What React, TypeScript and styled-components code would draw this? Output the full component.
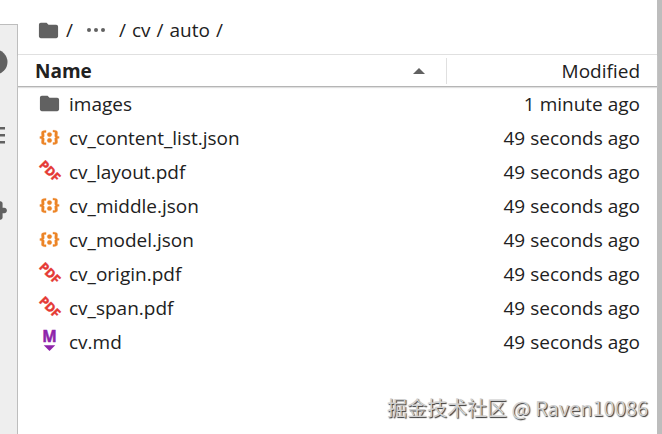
import React from "react";
import styled, { createGlobalStyle } from "styled-components";

const GlobalStyle = createGlobalStyle`
  *, *::before, *::after { box-sizing: border-box; }
  body {
    margin: 0;
    background: #fff;
    color: #212121;
    font: 19px/24px "Open Sans", "Noto Sans", sans-serif;
  }
  button { font: inherit; color: inherit; border: 0; padding: 0; background: none; cursor: pointer; }
  a { color: inherit; text-decoration: none; }
`;

const Shell = styled.div`
  display: flex;
  min-height: 100vh;
  position: relative;
  border-right: 5px solid #bdbdbd;
`;

const SideBar = styled.nav`
  flex: 0 0 18px;
  margin-top: 24px;
  padding-top: 24px;
  background: #eee;
  border: solid #bdbdbd;
  border-width: 1px 1px 0 0;
  overflow: hidden;
  display: flex;
  flex-direction: column;
  align-items: flex-start;
  gap: 48px;
`;

const SideTab = styled.button`
  display: flex;
  justify-content: flex-end;
  width: 8px;
  height: 26px;
  overflow: hidden;
  svg { flex: none; fill: #616161; }
`;

const Browser = styled.main`
  flex: 1;
  min-width: 0;
`;

const Crumbs = styled.nav`
  display: flex;
  align-items: center;
  height: 54px;
  padding: 6px 19px 0;
  gap: 6px;
`;

const CrumbLink = styled.a`
  display: flex;
  align-items: center;
`;

const MoreButton = styled.button`
  display: flex;
  align-items: center;
  padding: 0 7px;
`;

const Listing = styled.table`
  width: 100%;
  border-collapse: collapse;
  table-layout: fixed;
`;

const HeadRow = styled.tr`
  height: 32px;
  border-top: 1px solid #e0e0e0;
  border-bottom: 1px solid #b5b5b5;
  box-shadow: 0 1px 1px #e0e0e0;
`;

const HeadCell = styled.th<{ $modified?: boolean }>`
  width: ${(p) => (p.$modified ? "211px" : "auto")};
  padding: 2px 0;
  font-weight: ${(p) => (p.$modified ? 400 : 700)};
`;

const SortButton = styled.button<{ $modified?: boolean }>`
  display: flex;
  align-items: center;
  justify-content: ${(p) => (p.$modified ? "flex-end" : "space-between")};
  width: 100%;
  height: 26px;
  padding: 0 17px;
  border-left: ${(p) => (p.$modified ? "1px solid #e0e0e0" : "0")};
  font-weight: inherit;
`;

const Row = styled.tr`
  height: 34px;
`;

const NameCell = styled.td`
  padding: 0 0 0 20px;
`;

const FileLabel = styled.a`
  display: flex;
  align-items: center;
  gap: 8px;
`;

const ModifiedCell = styled.td`
  padding: 0 17px 0 0;
  text-align: right;
`;

const Icon = styled.svg`
  display: block;
  flex: none;
  width: 23px;
  height: 23px;
  overflow: visible;
`;

const Watermark = styled.div`
  position: absolute;
  right: 9px;
  bottom: 14px;
  color: #d0d0d0;
  font: 20px/24px "Noto Sans CJK SC", sans-serif;
  text-shadow: 1px 1px 1px #333;
`;

const FolderIcon = () => (
  <Icon viewBox="0 0 24 24" fill="#616161" aria-hidden="true">
    <path d="M10 4H4c-1.1 0-1.99.9-1.99 2L2 18c0 1.1.9 2 2 2h16c1.1 0 2-.9 2-2V8c0-1.1-.9-2-2-2h-8l-2-2z" />
  </Icon>
);

const JsonIcon = () => (
  <Icon viewBox="0 0 22 22" fill="#ec8426" stroke="#ec8426" strokeWidth="0.3" aria-hidden="true">
    <path d="M20.2 11.8c-1.6 0-1.7.5-1.7 1 0 .4.1.9.1 1.3.1.5.1.9.1 1.3 0 1.7-1.4 2.3-3.5 2.3h-.9v-1.9h.5c1.1 0 1.4 0 1.4-.8 0-.3 0-.6-.1-1 0-.4-.1-.8-.1-1.2 0-1.3 0-1.8 1.3-2-1.3-.2-1.3-.7-1.3-2 0-.4.1-.8.1-1.2.1-.4.1-.7.1-1 0-.8-.4-.7-1.4-.8h-.5V4.1h.9c2.2 0 3.5.7 3.5 2.3 0 .4-.1.9-.1 1.3-.1.5-.1.9-.1 1.3 0 .5.2 1 1.7 1v1.8zM1.8 10.1c1.6 0 1.7-.5 1.7-1 0-.4-.1-.9-.1-1.3-.1-.5-.1-.9-.1-1.3 0-1.6 1.4-2.3 3.5-2.3h.9v1.9h-.5c-1 0-1.4 0-1.4.8 0 .3 0 .6.1 1 0 .2.1.6.1 1 0 1.3 0 1.8-1.3 2C6 11.2 6 11.7 6 13c0 .4-.1.8-.1 1.2-.1.3-.1.7-.1 1 0 .8.3.8 1.4.8h.5v1.9h-.9c-2.1 0-3.5-.6-3.5-2.3 0-.4.1-.9.1-1.3.1-.5.1-.9.1-1.3 0-.5-.2-1-1.7-1v-1.9z" />
    <circle cx="11" cy="13.8" r="2.1" />
    <circle cx="11" cy="8.2" r="2.1" />
  </Icon>
);

const PdfIcon = () => (
  <Icon viewBox="0 0 24 24" fill="#e53935" stroke="#e53935" strokeWidth="0.5" aria-hidden="true">
    <text
      x="12"
      y="16"
      transform="rotate(45 12 12)"
      textAnchor="middle"
      fontFamily="Noto Sans, sans-serif"
      fontSize="13"
      fontWeight="700"
    >
      PDF
    </text>
  </Icon>
);

const MarkdownIcon = () => (
  <Icon viewBox="0 0 24 24" fill="#8e24aa" aria-hidden="true">
    <text
      x="12"
      y="13"
      textAnchor="middle"
      fontFamily="Noto Sans, sans-serif"
      fontSize="16"
      fontWeight="700"
      stroke="#8e24aa"
      strokeWidth="0.5"
    >
      M
    </text>
    <path d="M6 16h12l-6 6z" />
  </Icon>
);

const icons = { folder: FolderIcon, json: JsonIcon, pdf: PdfIcon, md: MarkdownIcon };

const files: { name: string; kind: keyof typeof icons; modified: string }[] = [
  { name: "images", kind: "folder", modified: "1 minute ago" },
  { name: "cv_content_list.json", kind: "json", modified: "49 seconds ago" },
  { name: "cv_layout.pdf", kind: "pdf", modified: "49 seconds ago" },
  { name: "cv_middle.json", kind: "json", modified: "49 seconds ago" },
  { name: "cv_model.json", kind: "json", modified: "49 seconds ago" },
  { name: "cv_origin.pdf", kind: "pdf", modified: "49 seconds ago" },
  { name: "cv_span.pdf", kind: "pdf", modified: "49 seconds ago" },
  { name: "cv.md", kind: "md", modified: "49 seconds ago" },
];

export default function App() {
  return (
    <>
      <GlobalStyle />
      <Shell>
        <SideBar aria-label="Panels">
          <SideTab aria-label="Running sessions">
            <svg width="26" height="26" viewBox="0 0 26 26">
              <circle cx="13" cy="13" r="12.5" />
            </svg>
          </SideTab>
          <SideTab aria-label="Table of contents">
            <svg width="26" height="26" viewBox="0 0 26 26">
              <path d="M7 4h16v2.4H7zM7 11h16v2.4H7zM7 18h16v2.4H7zM2 4h3v2.4H2zM2 11h3v2.4H2zM2 18h3v2.4H2z" />
            </svg>
          </SideTab>
          <SideTab aria-label="Extensions">
            <svg width="26" height="26" viewBox="0 1 24 24">
              <path d="M20.5 11H19V7c0-1.1-.9-2-2-2h-4V3.5C13 2.12 11.88 1 10.5 1S8 2.12 8 3.5V5H4c-1.1 0-1.99.9-1.99 2v3.8H3.5c1.49 0 2.7 1.21 2.7 2.7s-1.21 2.7-2.7 2.7H2V20c0 1.1.9 2 2 2h3.8v-1.5c0-1.49 1.21-2.7 2.7-2.7 1.49 0 2.7 1.21 2.7 2.7V22H17c1.1 0 2-.9 2-2v-4h1.5c1.38 0 2.5-1.12 2.5-2.5S21.88 11 20.5 11z" />
            </svg>
          </SideTab>
        </SideBar>
        <Browser>
          <Crumbs aria-label="Path">
            <CrumbLink href="#root" aria-label="Home">
              <FolderIcon />
            </CrumbLink>
            <span>/</span>
            <MoreButton aria-label="Show hidden folders">
              <svg width="20" height="6" viewBox="0 0 20 6" fill="#616161">
                <circle cx="3" cy="3" r="2" />
                <circle cx="10" cy="3" r="2" />
                <circle cx="17" cy="3" r="2" />
              </svg>
            </MoreButton>
            <span>/</span>
            <CrumbLink href="#cv">cv</CrumbLink>
            <span>/</span>
            <CrumbLink href="#auto">auto</CrumbLink>
            <span>/</span>
          </Crumbs>
          <Listing>
            <thead>
              <HeadRow>
                <HeadCell scope="col" aria-sort="ascending">
                  <SortButton>
                    Name
                    <svg width="20" height="6" viewBox="0 0 20 6" fill="#616161" aria-hidden="true">
                      <path d="M4 6h12l-6-6z" />
                    </svg>
                  </SortButton>
                </HeadCell>
                <HeadCell scope="col" $modified>
                  <SortButton $modified>Modified</SortButton>
                </HeadCell>
              </HeadRow>
            </thead>
            <tbody>
              {files.map((file) => {
                const KindIcon = icons[file.kind];
                return (
                  <Row key={file.name}>
                    <NameCell>
                      <FileLabel href={`#${file.name}`}>
                        <KindIcon />
                        {file.name}
                      </FileLabel>
                    </NameCell>
                    <ModifiedCell>{file.modified}</ModifiedCell>
                  </Row>
                );
              })}
            </tbody>
          </Listing>
        </Browser>
        <Watermark>掘金技术社区 @ Raven10086</Watermark>
      </Shell>
    </>
  );
}
